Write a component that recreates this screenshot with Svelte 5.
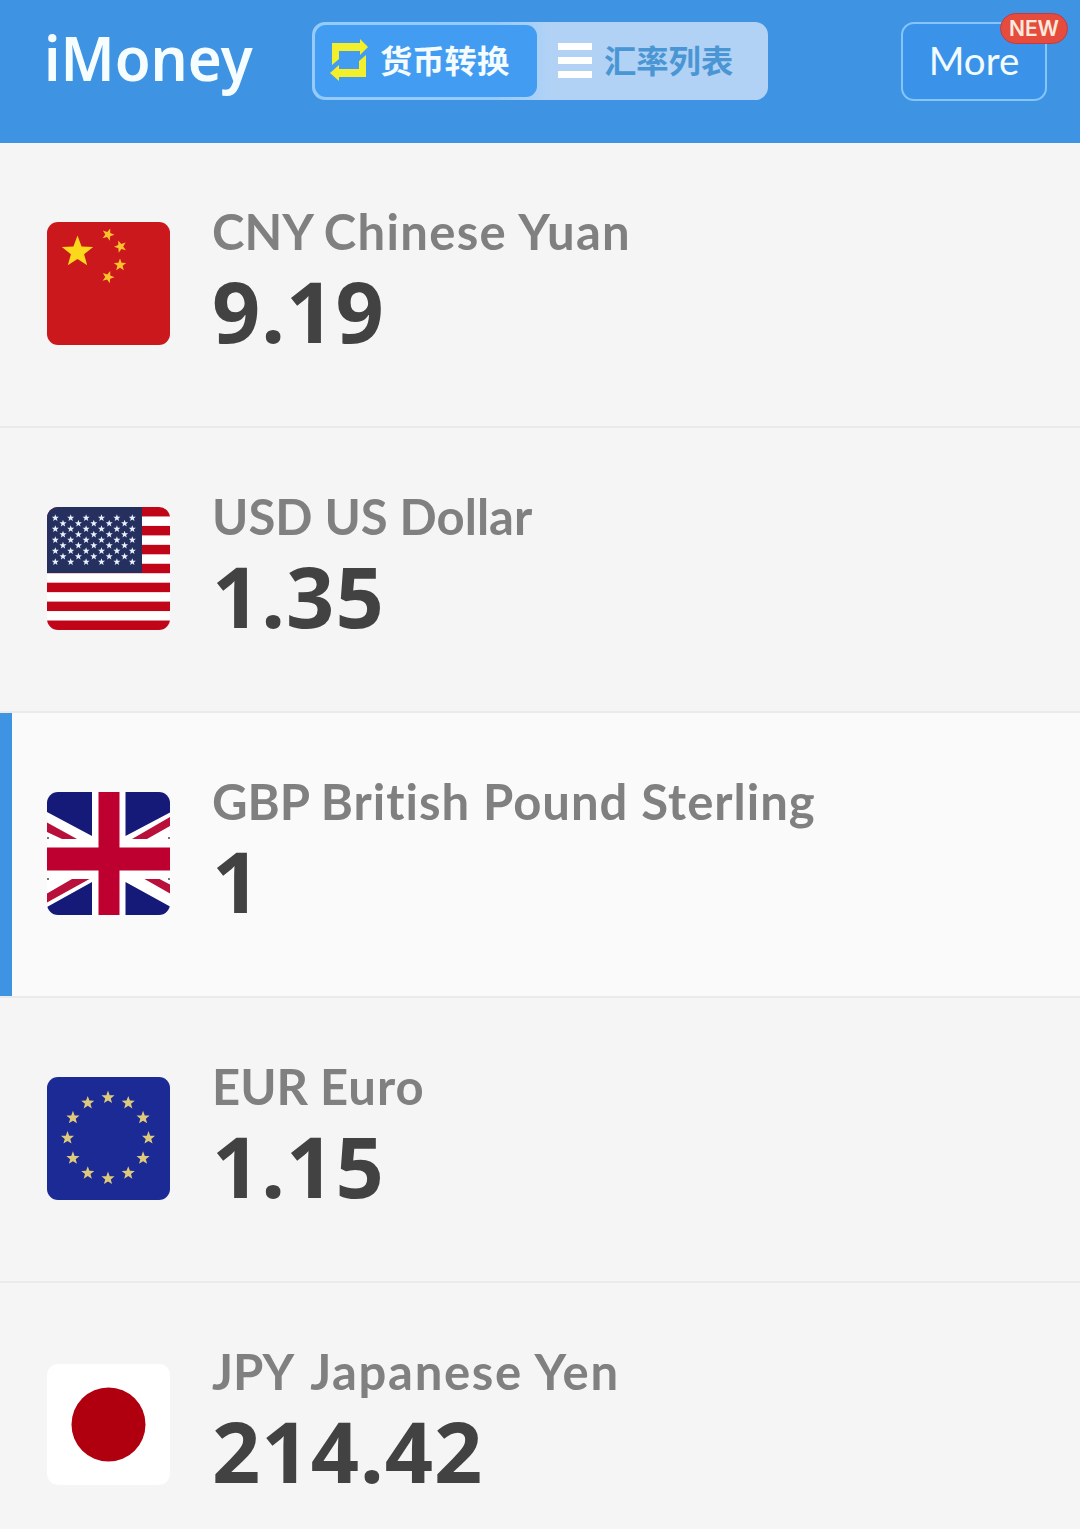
<script>
  let selected = 'GBP';

  const currencies = [
    { code: 'CNY', name: 'Chinese Yuan', value: '9.19' },
    { code: 'USD', name: 'US Dollar', value: '1.35' },
    { code: 'GBP', name: 'British Pound Sterling', value: '1' },
    { code: 'EUR', name: 'Euro', value: '1.15' },
    { code: 'JPY', name: 'Japanese Yen', value: '214.42' },
  ];

  // Five pointed star around cx, cy
  function star(cx, cy, r, turn = 0) {
    const points = [];
    for (let i = 0; i < 10; i++) {
      const radius = i % 2 ? r * 0.42 : r;
      const angle = ((i * 36 - 90 + turn) * Math.PI) / 180;
      points.push(
        (cx + radius * Math.cos(angle)).toFixed(2) +
          ',' +
          (cy + radius * Math.sin(angle)).toFixed(2)
      );
    }
    return points.join(' ');
  }

  const cnStars = [
    [61, 12.5, 20],
    [73.5, 24.5, -20],
    [73, 43, 0],
    [61, 55, 20],
  ];

  const usStars = [];
  for (let row = 0; row < 9; row++) {
    const count = row % 2 ? 5 : 6;
    for (let col = 0; col < count; col++) {
      usStars.push([8.3 + col * 15.4 + (row % 2 ? 7.7 : 0), 11 + row * 5.5]);
    }
  }

  const euStars = [];
  for (let i = 0; i < 12; i++) {
    const angle = (i * Math.PI) / 6;
    euStars.push([61 + 40.5 * Math.sin(angle), 61 - 40.5 * Math.cos(angle)]);
  }
</script>

<div class="app">
  <header>
    <h1>iMoney</h1>

    <div class="tabs">
      <div class="tab active">
        <svg class="swap" viewBox="0 0 38 42" width="38" height="42">
          <path d="M2 26V4h28V0l8 8-8 8v-4H9v8z" />
          <path d="M36 16v22H9v4l-9-8 9-8v4h20v-8z" />
        </svg>
        <span>货币转换</span>
      </div>
      <div class="tab">
        <div class="bars"><i></i><i></i><i></i></div>
        <span>汇率列表</span>
      </div>
    </div>

    <div class="more">
      <span>More</span>
      <b class="badge">NEW</b>
    </div>
  </header>

  <main>
    {#each currencies as { code, name, value }}
      <div class="row" class:selected={code === selected}>
        <svg class="flag" viewBox="0 0 123 123" width="123" height="123">
          {#if code === 'CNY'}
            <rect width="123" height="123" fill="#cb181d" />
            <polygon points={star(30.5, 30, 16.5)} fill="#fcd81c" />
            {#each cnStars as [x, y, turn]}
              <polygon points={star(x, y, 6.5, turn)} fill="#f8c32c" />
            {/each}
          {:else if code === 'USD'}
            <rect width="123" height="123" fill="#fff" />
            {#each [0, 2, 4, 6, 8, 10, 12] as stripe}
              <rect y={stripe * 9.46} width="123" height="9.46" fill="#c00518" />
            {/each}
            <rect width="95" height="66" fill="#25305f" />
            {#each usStars as [x, y]}
              <polygon points={star(x, y, 3.7)} fill="#e8f0ff" />
            {/each}
          {:else if code === 'GBP'}
            <rect width="123" height="123" fill="#fff" />
            <path
              d="M0 0H45V44L0 20zM78.500 0H123V20.500L78.500 44zM45 123H0V115L45 90zM78.500 123H123V114.500L78.500 90z"
              fill="#151a78"
            />
            <path
              d="M0 30.500V40L15 47H30zM85 47H100L123 34V25zM0 101.500 25 87H42.500L0 110.500zM97.500 87H112.500L123 92.500V101.500z"
              fill="#b8103a"
            />
            <path d="M51.500 0h21v55.500H123v23H72.500V123h-21V78.500H0v-23h51.500z" fill="#bd002f" />
            <path d="M0 45h2v2H0zM121 45h2v2h-2zM0 86h2v2H0zM121 86h2v2h-2z" fill="#777" />
          {:else if code === 'EUR'}
            <rect width="123" height="123" fill="#1b2a94" />
            {#each euStars as [x, y]}
              <polygon points={star(x, y, 6.9)} fill="#dfca7c" />
            {/each}
          {:else}
            <rect y="2" width="123" height="121" rx="11" fill="#fff" />
            <circle cx="61.500" cy="62.500" r="37" fill="#b0000f" />
          {/if}
        </svg>
        <div class="info">
          <div class="name"><span>{code}</span> <span class={code}>{name}</span></div>
          <div class="value">{value}</div>
        </div>
      </div>
    {/each}
  </main>
</div>

<style>
  :global(body) {
    margin: 0;
    background: #f5f5f5;
  }

  .app {
    width: 1080px;
    height: 1529px;
    overflow: hidden;
    background: #f5f5f5;
    font-family: Lato, 'Noto Sans CJK SC', sans-serif;
  }

  header {
    display: flex;
    align-items: flex-start;
    height: 143px;
    padding: 22px 33px 0 44px;
    box-sizing: border-box;
    background: #3e93e3;
  }

  h1 {
    width: 268px;
    margin: 0;
    color: #f6fdff;
    font: 600 62px/71px 'Noto Sans', sans-serif;
    transform: scaleX(0.94);
    transform-origin: left;
  }

  .tabs {
    display: flex;
    width: 456px;
    height: 78px;
    padding: 3px;
    box-sizing: border-box;
    border-radius: 13px;
    background: linear-gradient(90deg, #94cbfa 40%, #b1d2f5 52%);
  }

  .tab {
    display: flex;
    align-items: center;
    box-sizing: border-box;
    width: 222px;
    padding-left: 21px;
    border-radius: 11px;
    color: #4a96d4;
    font: 700 32.3px/68px 'Noto Sans CJK SC', sans-serif;
    white-space: nowrap;
  }

  .tab span {
    padding-bottom: 4px;
  }

  .active {
    padding-left: 15px;
    background: #429cf1;
    color: #f4fcff;
  }

  .swap {
    margin: 0 12px 3px 0;
    fill: #f3f02b;
  }

  .bars {
    display: flex;
    flex-direction: column;
    gap: 7px;
    width: 34px;
    margin: 0 12px 1px 0;
  }

  .bars i {
    height: 7px;
    background: #fff;
  }

  .more {
    position: relative;
    width: 146px;
    height: 79px;
    margin-left: auto;
    box-sizing: border-box;
    border: 2px solid #84c6fb;
    border-radius: 13px;
    background: #3b93e9;
    color: #f2fcff;
    font-size: 38.5px;
    line-height: 73px;
    text-align: center;
  }

  .badge {
    position: absolute;
    top: -11px;
    right: -23px;
    width: 68px;
    height: 31px;
    box-sizing: border-box;
    border: 1px solid #bf3c45;
    border-radius: 16px;
    background: #e54c3d;
    color: #ffe9dc;
    font: 600 21px/30px Inter, sans-serif;
  }

  .row {
    display: flex;
    height: 285px;
    padding: 79px 0 0 47px;
    box-sizing: border-box;
    border-bottom: 2px solid #eaeaea;
  }

  .selected {
    background: #fafafa;
    box-shadow: inset 12px 0 #3e93e3;
  }

  .flag {
    border-radius: 11px;
  }

  .info {
    margin: -16px 0 0 42px;
  }

  .name {
    color: #808080;
    font-size: 49px;
    font-weight: 700;
    font-variant-ligatures: none;
    line-height: 50px;
    white-space: nowrap;
  }

  .CNY {
    letter-spacing: 1.3px;
  }

  .GBP,
  .EUR {
    letter-spacing: 1px;
  }

  .JPY {
    margin-left: 6px;
    letter-spacing: 1.7px;
  }

  .value {
    margin-top: 9px;
    color: #424242;
    font: 700 84.5px/92px 'Noto Sans', sans-serif;
    letter-spacing: 1px;
  }
</style>
